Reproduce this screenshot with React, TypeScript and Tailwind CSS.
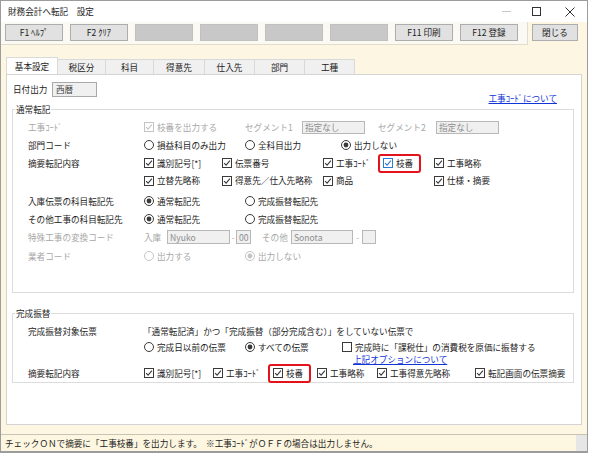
import React from 'react';

type Tone = 'normal' | 'disabled' | 'focus';

function toneColor(tone: Tone) {
  if (tone === 'disabled') return '#c4c4c4';
  if (tone === 'focus') return '#2b7bd0';
  return '#3a3a3a';
}

function CheckBox({ checked = true, tone = 'normal' }: { checked?: boolean; tone?: Tone }) {
  const c = toneColor(tone);
  return (
    <svg width="10" height="10" viewBox="0 0 10 10" className="shrink-0">
      <rect x="0.5" y="0.5" width="9" height="9" fill="#fff" stroke={c} />
      {checked && <path d="M2.1 5.1 L4.1 7.1 L7.9 2.7" fill="none" stroke={c} strokeWidth="1.1" />}
    </svg>
  );
}

function Radio({ on = false, tone = 'normal' }: { on?: boolean; tone?: Tone }) {
  const c = toneColor(tone);
  return (
    <svg width="10" height="10" viewBox="0 0 10 10" className="shrink-0">
      <circle cx="5" cy="5" r="4.5" fill="#fff" stroke={c} />
      {on && <circle cx="5" cy="5" r="2.4" fill={c} />}
    </svg>
  );
}

function Cb({
  label,
  w = '',
  checked = true,
  tone = 'normal',
}: {
  label: string;
  w?: string;
  checked?: boolean;
  tone?: Tone;
}) {
  return (
    <span className={`flex items-center gap-[3px] shrink-0 whitespace-nowrap ${w} ${tone === 'disabled' ? 'text-[#a8a8a8]' : ''}`}>
      <CheckBox checked={checked} tone={tone} />
      <span>{label}</span>
    </span>
  );
}

function Rb({ label, w = '', on = false, tone = 'normal' }: { label: string; w?: string; on?: boolean; tone?: Tone }) {
  return (
    <span className={`flex items-center gap-[3px] shrink-0 whitespace-nowrap ${w} ${tone === 'disabled' ? 'text-[#a8a8a8]' : ''}`}>
      <Radio on={on} tone={tone} />
      <span>{label}</span>
    </span>
  );
}

// red highlight round the 枝番 checkbox
function Marked({ w, tone = 'normal' }: { w: string; tone?: Tone }) {
  return (
    <span className={`flex items-center shrink-0 ${w}`}>
      <span className="flex items-center gap-[3px] -ml-[5px] pl-[3px] pr-[6px] h-[19px] border-2 border-[#e3121b] rounded-[3px]">
        <CheckBox tone={tone} />
        <span>枝番</span>
      </span>
    </span>
  );
}

function Field({ value = '', w, h = 'h-[13px]' }: { value?: string; w: string; h?: string }) {
  return (
    <span className={`flex items-center shrink-0 border border-[#b8b8b8] bg-[#f0f0f0] px-[2px] text-[#8d8d8d] ${w} ${h}`}>
      {value}
    </span>
  );
}

function Row({
  label,
  dim = false,
  h = 'h-[18px]',
  extra = '',
  children,
}: {
  label: string;
  dim?: boolean;
  h?: string;
  extra?: string;
  children?: React.ReactNode;
}) {
  return (
    <div className={`flex items-center ${h} ${extra}`}>
      <span className={`w-[116px] shrink-0 whitespace-nowrap ${dim ? 'text-[#a8a8a8]' : ''}`}>{label}</span>
      {children}
    </div>
  );
}

function Group({ title, extra = '', children }: { title: string; extra?: string; children: React.ReactNode }) {
  return (
    <fieldset className={`border border-[#dcdcdc] ml-[5px] mr-[7px] ${extra}`}>
      <legend className="ml-[2px] px-[1px] leading-[12px]">{title}</legend>
      {children}
    </fieldset>
  );
}

const toolButtons = ['F1 ﾍﾙﾌﾟ', 'F2 ｸﾘｱ', '', '', '', '', 'F11 印刷', 'F12 登録'];
const tabs = [
  { name: '基本設定', w: 'w-[52px]' },
  { name: '税区分', w: 'w-[48px]' },
  { name: '科目', w: 'w-[48px]' },
  { name: '得意先', w: 'w-[51px]' },
  { name: '仕入先', w: 'w-[50px]' },
  { name: '部門', w: 'w-[50px]' },
  { name: '工種', w: 'w-[50px]' },
];

export default function App() {
  return (
    <div className="w-[590px] h-[455px] bg-white font-['Noto_Sans_CJK_JP','Liberation_Sans',sans-serif] text-[8.6px] text-[#1c1c1c] leading-none">
      <div className="w-[588px] h-[453px] border border-[#9c9c9c] flex flex-col bg-[#fdf6e3]">
        {/* title bar */}
        <div className="h-[21px] shrink-0 bg-white flex items-center pl-[7px]">
          <span className="flex-1">財務会計へ転記　設定</span>
          <span className="w-[9px] h-px bg-[#c8c8c8] mr-[21px]" />
          <span className="w-[9px] h-[9px] border border-[#333] mr-[24px]" />
          <svg width="10" height="10" viewBox="0 0 10 10" className="mr-[12px]">
            <path d="M0.5 0.5 L9.5 9.5 M9.5 0.5 L0.5 9.5" stroke="#333" strokeWidth="1" />
          </svg>
        </div>

        {/* toolbar */}
        <div className="h-[23px] shrink-0 flex">
          <div className="w-[527px] flex items-start gap-[7px] pl-[4px] pt-[2px] bg-[#fbf9f3] border-r border-b border-[#e2dccb]">
            {toolButtons.map((b, i) =>
              b ? (
                <span
                  key={i}
                  className="w-[58px] h-[17px] flex items-center justify-center bg-[#e1e1e1] border border-[#adadad]"
                >
                  {b}
                </span>
              ) : (
                <span key={i} className="w-[58px] h-[17px] bg-[#c8c8c8] border border-[#c0c0c0]" />
              ),
            )}
          </div>
          <div className="flex-1 pt-[2px] pl-[4px]">
            <span className="w-[46px] h-[17px] flex items-center justify-center bg-[#e1e1e1] border border-[#adadad]">
              閉じる
            </span>
          </div>
        </div>

        <div className="h-[12px] shrink-0" />

        {/* tabs */}
        <div className="h-[17px] shrink-0 flex items-end pl-[5px]">
          {tabs.map((t, i) => (
            <span
              key={t.name}
              className={`${t.w} flex items-center justify-center border-t border-r border-[#d9d9d9] ${
                i === 0 ? 'h-[17px] bg-white border-l' : 'h-[15px] bg-[#f0f0f0]'
              }`}
            >
              {t.name}
            </span>
          ))}
        </div>

        {/* main panel */}
        <div className="flex-1 flex flex-col ml-[5px] mr-[5px] bg-white border border-[#d4d4d4]">
          <div className="flex justify-between h-[28px] pt-[7px] pl-[6px] pr-[24px]">
            <div className="flex items-center h-[15px]">
              <span className="w-[39px]">日付出力</span>
              <span className="w-[45px] h-[15px] flex items-center px-[3px] bg-[#f0f0f0] border border-[#a9a9a9] text-[#444]">
                西暦
              </span>
            </div>
            <span className="self-end text-[#1235d8] underline leading-[10px]">工事ｺｰﾄﾞについて</span>
          </div>

          <Group title="通常転記">
            <div className="pl-[15px] pt-[3px] pb-[27px]">
              <Row label="工事ｺｰﾄﾞ" dim>
                <Cb label="枝番を出力する" tone="disabled" w="w-[101px]" />
                <span className="w-[57px] text-[#a8a8a8] whitespace-nowrap">セグメント1</span>
                <Field value="指定なし" w="w-[63px]" />
                <span className="w-[13px]" />
                <span className="w-[58px] text-[#a8a8a8] whitespace-nowrap">セグメント2</span>
                <Field value="指定なし" w="w-[63px]" />
              </Row>
              <Row label="部門コード">
                <Rb label="損益科目のみ出力" w="w-[101px]" />
                <Rb label="全科目出力" w="w-[96px]" />
                <Rb label="出力しない" on />
              </Row>
              <Row label="摘要転記内容">
                <Cb label="識別記号[*]" w="w-[78px]" />
                <Cb label="伝票番号" w="w-[101px]" />
                <Cb label="工事ｺｰﾄﾞ" w="w-[60px]" />
                <Marked w="w-[51px]" tone="focus" />
                <Cb label="工事略称" />
              </Row>
              <Row label="" h="h-[17px]">
                <Cb label="立替先略称" w="w-[78px]" />
                <Cb label="得意先／仕入先略称" w="w-[101px]" />
                <Cb label="商品" w="w-[111px]" />
                <Cb label="仕様・摘要" />
              </Row>
              <Row label="入庫伝票の科目転記先" extra="mt-[3px]">
                <Rb label="通常転記先" on w="w-[101px]" />
                <Rb label="完成振替転記先" />
              </Row>
              <Row label="その他工事の科目転記先">
                <Rb label="通常転記先" on w="w-[101px]" />
                <Rb label="完成振替転記先" />
              </Row>
              <Row label="特殊工事の変換コード" dim>
                <span className="w-[23px] text-[#a8a8a8]">入庫</span>
                <Field value="Nyuko" w="w-[63px]" h="h-[14px]" />
                <span className="w-[6px] text-center text-[#a8a8a8]">-</span>
                <Field value="00" w="w-[15px]" h="h-[14px]" />
                <span className="w-[11px]" />
                <span className="w-[29px] text-[#a8a8a8]">その他</span>
                <Field value="Sonota" w="w-[62px]" h="h-[14px]" />
                <span className="w-[9px] text-center text-[#a8a8a8]">-</span>
                <Field w="w-[14px]" h="h-[14px]" />
              </Row>
              <Row label="業者コード" dim extra="mt-[1px]">
                <Rb label="出力する" tone="disabled" w="w-[101px]" />
                <Rb label="出力しない" on tone="disabled" />
              </Row>
            </div>
          </Group>

          <Group title="完成振替" extra="mt-[14px]">
            <div className="pl-[15px] pt-[3px]">
              <Row label="完成振替対象伝票">
                <span className="whitespace-nowrap -ml-[1px]">
                  「通常転記済」かつ「完成振替（部分完成含む）」をしていない伝票で
                </span>
              </Row>
              <Row label="" h="h-[14px]">
                <Rb label="完成日以前の伝票" w="w-[101px]" />
                <Rb label="すべての伝票" on w="w-[97px]" />
                <Cb label="完成時に「課税仕」の消費税を原価に振替する" checked={false} />
              </Row>
              <Row label="" h="h-[10px]">
                <span className="w-[209px]" />
                <span className="text-[#1235d8] underline whitespace-nowrap">上記オプションについて</span>
              </Row>
              <Row label="摘要転記内容">
                <Cb label="識別記号[*]" w="w-[69px]" />
                <Cb label="工事ｺｰﾄﾞ" w="w-[60px]" />
                <Marked w="w-[44px]" />
                <Cb label="工事略称" w="w-[60px]" />
                <Cb label="工事得意先略称" w="w-[98px]" />
                <Cb label="転記画面の伝票摘要" />
              </Row>
            </div>
          </Group>
        </div>

        <div className="h-[9px] shrink-0" />

        {/* status bar */}
        <div className="h-[18px] shrink-0 flex border-t border-[#c9c3b3] border-b border-b-[#9c9c9c]">
          <span className="flex-1 flex items-center pl-[4px] bg-[#fdf6e0] whitespace-nowrap">
            チェックＯＮで摘要に「工事枝番」を出力します。　※工事ｺｰﾄﾞがＯＦＦの場合は出力しません。
          </span>
          <span className="w-[11px] bg-[#e6e6e6]" />
        </div>
      </div>
    </div>
  );
}
